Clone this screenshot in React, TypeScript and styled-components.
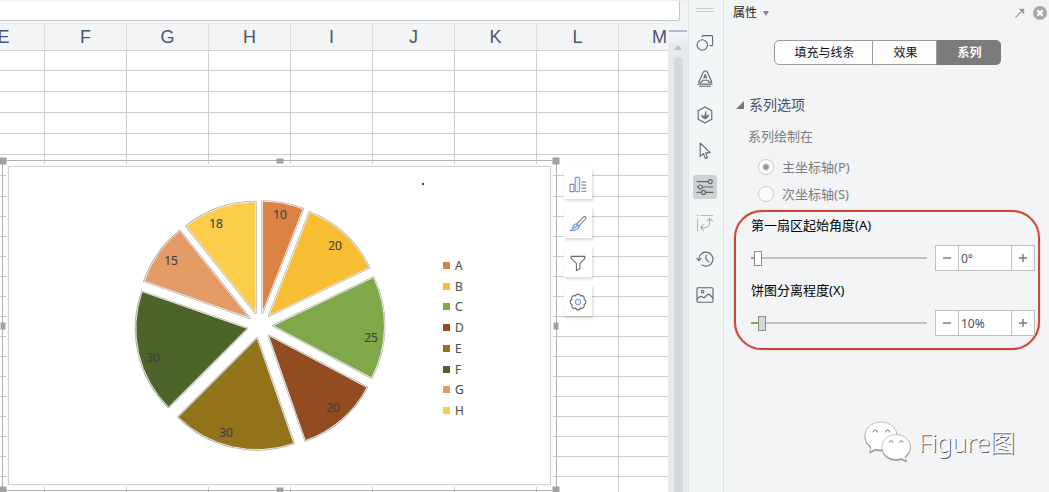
import React, { useState } from "react";
import styled, { createGlobalStyle, css } from "styled-components";

const Global = createGlobalStyle`
  *, *::before, *::after { box-sizing: border-box; }
  body {
    margin: 0;
    background: #f2f4f6;
    font-family: "Noto Sans", "Noto Sans CJK SC", sans-serif;
    font-size: 13px;
    color: #111;
  }
  button, input { font: inherit; color: inherit; margin: 0; padding: 0; }
`;

/* ---------- Page ---------- */

const Page = styled.div`
  display: flex;
  height: 100vh;
  overflow: hidden;
`;

const Workspace = styled.main`
  flex: 1;
  min-width: 0;
  display: flex;
  flex-direction: column;
`;

const FormulaBar = styled.div`
  flex: none;
  height: 23px;
  padding: 0 8px 2px 0;
  border-top: 1px solid #eceeef;
  background: #f2f4f5;
`;

const FormulaInput = styled.input`
  display: block;
  width: 100%;
  height: 20px;
  border: solid #c6c9c9;
  border-width: 0 1px 1px 0;
  border-radius: 0 0 3px 0;
  background: #fff;
  outline: none;
`;

const SheetRow = styled.div`
  flex: 1;
  min-height: 0;
  display: flex;
`;

const Sheet = styled.section`
  position: relative;
  flex: 1;
  min-width: 0;
  overflow: hidden;
  background: #fff;
`;

const Grid = styled.table`
  table-layout: fixed;
  width: 738px;
  margin-left: -37px;
  border-collapse: separate;
  border-spacing: 0;
`;

const HeadCell = styled.th`
  width: 82px;
  height: 28px;
  padding: 0;
  border-top: 1px solid #e8ebec;
  border-right: 1px solid #dcdfe1;
  border-bottom: 1px solid #cfd1d1;
  background: #f2f4f6;
  color: #4c5470;
  font: 18px/26px "Liberation Sans", sans-serif;
`;

const Cell = styled.td<{ $h: number }>`
  height: ${(p) => p.$h}px;
  padding: 0;
  border-right: 1px solid #cccdcd;
  border-bottom: 1px solid #cccdcd;
`;

/* ---------- Chart object ---------- */

const ChartFrame = styled.div`
  position: absolute;
  left: 2px;
  top: 137px;
  width: 555px;
  height: 331px;
  padding: 5px;
  border: 1px solid #b0b3b3;
`;

const ChartArea = styled.figure`
  position: relative;
  width: 100%;
  height: 100%;
  margin: 0;
  border: 1px solid #cfd1d1;
  outline: 2px solid #f8f9f9;
  background: #fff;
`;

const Handle = styled.i<{ $x: string; $y: string; $w?: number; $h?: number }>`
  position: absolute;
  left: ${(p) => p.$x};
  top: ${(p) => p.$y};
  width: ${(p) => p.$w ?? 7}px;
  height: ${(p) => p.$h ?? 7}px;
  transform: translate(-50%, -50%);
  background: #9fa2a2;
`;

const Pie = styled.svg`
  display: block;
  width: 100%;
  height: 100%;
  text {
    font: 12px "Open Sans", sans-serif;
    fill: #404040;
    stroke: #404040;
    stroke-width: 0.2px;
    text-anchor: middle;
  }
`;

const Legend = styled.ul`
  position: absolute;
  left: 434px;
  top: 88px;
  height: 166px;
  margin: 0;
  padding: 0;
  list-style: none;
  display: flex;
  flex-direction: column;
`;

const LegendItem = styled.li<{ $color: string }>`
  flex: 1;
  display: flex;
  align-items: center;
  gap: 5px;
  font: 12px "Open Sans", sans-serif;
  color: #505050;
  -webkit-text-stroke: 0.2px #505050;
  &::before {
    content: "";
    width: 7px;
    height: 7px;
    background: ${(p) => p.$color};
  }
`;

const ChartTools = styled.div`
  position: absolute;
  left: 564px;
  top: 145px;
  display: flex;
  flex-direction: column;
  gap: 8px;
`;

const ToolButton = styled.button`
  display: grid;
  place-items: center;
  width: 28px;
  height: 31px;
  padding-top: 2px;
  border: 0;
  background: #fff;
  box-shadow: 1px 2px 3px rgba(0, 0, 0, 0.16);
`;

/* ---------- Scrollbar ---------- */

const Scroll = styled.div`
  flex: none;
  width: 20px;
  display: flex;
  flex-direction: column;
  align-items: center;
  padding: 7px 1px 0;
  background: linear-gradient(#f2f4f6 14px, #e7eaec 22px);
`;

const SplitLine = styled.div`
  flex: none;
  width: 100%;
  height: 2px;
  background: #b3bccd;
`;

const ScrollUp = styled.button`
  flex: none;
  display: grid;
  place-items: center;
  width: 16px;
  height: 25px;
  padding-top: 5px;
  border: 0;
  background: none;
`;

const ScrollThumb = styled.div`
  flex: 1;
  width: 9px;
  border-radius: 5px 5px 0 0;
  background: #d5d9df;
`;

/* ---------- Icon rail ---------- */

const Rail = styled.nav`
  flex: none;
  width: 36px;
  display: flex;
  flex-direction: column;
  align-items: center;
  gap: 12px;
  padding: 8px 2px 0 0;
  border: solid #dfe2e4;
  border-width: 0 1px;
  background: #f3f6f7;
`;

const Grip = styled.div`
  width: 18px;
  height: 4px;
  margin-bottom: 7px;
  border: solid #cdd0d1;
  border-width: 1px 0;
`;

const RailButton = styled.button<{ $active?: boolean; $dim?: boolean }>`
  display: grid;
  place-items: center;
  width: 24px;
  height: 24px;
  border: 0;
  border-radius: 3px;
  background: ${(p) => (p.$active ? "#cfd1d2" : "none")};
  color: ${(p) => (p.$dim ? "#b4b6b8" : "#62666a")};
`;

/* ---------- Property panel ---------- */

const Panel = styled.aside`
  position: relative;
  flex: none;
  width: 325px;
  background: #f2f4f6;
`;

const PanelHead = styled.header`
  display: flex;
  align-items: center;
  height: 26px;
  padding: 0 2px 0 9px;
`;

const PanelTitle = styled.button`
  display: flex;
  align-items: center;
  gap: 6px;
  border: 0;
  background: none;
  font-size: 12px;
  line-height: 18px;
  color: #222;
`;

const HeadActions = styled.div`
  display: flex;
  align-items: center;
  gap: 8px;
  margin-left: auto;
`;

const PlainButton = styled.button`
  display: flex;
  border: 0;
  background: none;
`;

const Tabs = styled.div`
  display: flex;
  justify-content: center;
  padding: 14px 0 0 2px;
`;

const Tab = styled.button<{ $wide?: boolean; $on?: boolean }>`
  width: ${(p) => (p.$wide ? 99 : 64)}px;
  height: 25px;
  padding-left: 2px;
  border: 1px solid #9b9b9b;
  border-left-width: 0;
  background: #fdfdfd;
  font-size: 12px;
  line-height: 22px;
  &:first-child { border-left-width: 1px; border-radius: 5px 0 0 5px; }
  &:last-child { border-radius: 0 5px 5px 0; }
  ${(p) =>
    p.$on &&
    css`
      background: #7b7b7b;
      border-color: #7b7b7b;
      color: #fff;
      font-weight: 700;
    `}
`;

const SectionTitle = styled.h2`
  display: flex;
  align-items: center;
  gap: 5px;
  margin: 29px 0 0 12px;
  font-size: 14px;
  font-weight: 400;
  line-height: 22px;
  color: #47506c;
`;

const AxisGroup = styled.fieldset`
  margin: 0;
  padding: 10px 0 0 24px;
  border: 0;
  color: #7e7e7e;
  line-height: 20px;
`;

const AxisCaption = styled.p`
  margin: 0 0 7px;
`;

const RadioRow = styled.label`
  display: flex;
  align-items: center;
  gap: 8px;
  height: 27px;
  padding-left: 10px;
`;

const Radio = styled.input`
  appearance: none;
  width: 16px;
  height: 16px;
  border: 1px solid #c9cbcc;
  border-radius: 50%;
  background: #fafbfb;
  &:checked {
    background: radial-gradient(circle, #969696 2px, #fdfdfd 4px);
  }
`;

const Callout = styled.section`
  margin: 3px 9px 0 10px;
  padding: 4px 3px 7px 15px;
  border: 2px solid #cf4534;
  border-radius: 28px;
  box-shadow: 0 0 1px #cf4534;
`;

const Field = styled.div`
  height: 65px;
  &:last-child { height: 60px; }
`;

const FieldLabel = styled.label`
  display: block;
  height: 29px;
  line-height: 18px;
  color: #000;
`;

const FieldRow = styled.div`
  display: flex;
  align-items: center;
  gap: 8px;
`;

const SliderTrack = styled.div`
  flex: 1;
  min-width: 0;
  display: flex;
  align-items: center;
  &::before {
    content: "";
    width: 3px;
    height: 2px;
    background: #86a94d;
  }
`;

const Slider = styled.input<{ $thumb: string }>`
  appearance: none;
  flex: 1;
  min-width: 0;
  height: 15px;
  background: linear-gradient(#bfc0c1, #bfc0c1) center / 100% 2px no-repeat;
  outline: none;
  &::-webkit-slider-thumb {
    appearance: none;
    width: 8px;
    height: 15px;
    border: 1px solid #8b8b8b;
    background: ${(p) => p.$thumb};
  }
`;

const Stepper = styled.div`
  display: flex;
  width: 100px;
  height: 26px;
  border: 1px solid #bdbfc0;
  background: #fff;
`;

const StepButton = styled.button`
  display: grid;
  place-items: center;
  width: 22px;
  border: 0;
  background: none;
`;

const StepValue = styled.input`
  flex: 1;
  min-width: 0;
  padding: 0 2px;
  border: solid #bdbfc0;
  border-width: 0 1px;
  background: none;
  font-size: 12px;
  color: #4a5060;
  outline: none;
`;

const Watermark = styled.div`
  position: absolute;
  right: 34px;
  bottom: 28px;
  display: flex;
  align-items: center;
  gap: 6px;
  font: 300 25px/44px "Noto Sans", "Noto Sans CJK SC", sans-serif;
  color: #fff;
  text-shadow: 1px 1px 0 #5a5a5a;
`;

const WatermarkLogo = styled.svg`
  overflow: visible;
  filter: drop-shadow(0 1px 0 #8a8a8a);
`;

/* ---------- Data ---------- */

const columns = ["E", "F", "G", "H", "I", "J", "K", "L", "M"];
const rowHeights = [20, ...Array(6).fill(21), ...Array(40).fill(20)];

const slices = [
  { name: "A", value: 10, color: "#dc8344", x: 280, y: 219 },
  { name: "B", value: 20, color: "#f8be33", x: 335, y: 250 },
  { name: "C", value: 25, color: "#80a848", x: 371, y: 342 },
  { name: "D", value: 20, color: "#924c20", x: 333, y: 412 },
  { name: "E", value: 30, color: "#92731a", x: 226, y: 437 },
  { name: "F", value: 30, color: "#4c6329", x: 153, y: 362 },
  { name: "G", value: 15, color: "#e59b66", x: 171, y: 265 },
  { name: "H", value: 18, color: "#fbcd4b", x: 216, y: 228 },
];

const RADIUS = 111.5;
const EXPLODE = 13;
const CENTER = { x: 260, y: 325.5 };
const total = slices.reduce((sum, s) => sum + s.value, 0);

function slicePath(index: number) {
  const before = slices.slice(0, index).reduce((sum, s) => sum + s.value, 0);
  const a0 = (before / total) * Math.PI * 2;
  const a1 = ((before + slices[index].value) / total) * Math.PI * 2;
  const mid = (a0 + a1) / 2;
  const cx = CENTER.x + EXPLODE * Math.sin(mid);
  const cy = CENTER.y - EXPLODE * Math.cos(mid);
  const at = (a: number) =>
    `${(cx + RADIUS * Math.sin(a)).toFixed(2)} ${(cy - RADIUS * Math.cos(a)).toFixed(2)}`;
  return `M${cx.toFixed(2)} ${cy.toFixed(2)}L${at(a0)}A${RADIUS} ${RADIUS} 0 0 1 ${at(a1)}Z`;
}

/* Eight round lobes on a circle around (9, 9). */
const gearPath =
  Array.from({ length: 9 }, (_, i) => {
    const a = ((i - 0.5) * Math.PI) / 4;
    const p = `${(9 + 6.5 * Math.sin(a)).toFixed(2)} ${(9 - 6.5 * Math.cos(a)).toFixed(2)}`;
    return i === 0 ? `M${p}` : `A2.6 2.6 0 0 1 ${p}`;
  }).join("") + "Z";

/* ---------- Icons ---------- */

const Icon = ({ children, size = 18 }: { children: React.ReactNode; size?: number }) => (
  <svg width={size} height={size} viewBox="0 0 18 18" fill="none" stroke="currentColor"
    strokeWidth="1.1" strokeLinecap="round" strokeLinejoin="round" aria-hidden="true">
    {children}
  </svg>
);

const railItems = [
  { label: "形状", icon: <><circle cx="6.3" cy="11" r="5.2" /><path d="M6.2 3.2V2.6Q6.2 1.6 7.2 1.6H15.6Q16.6 1.6 16.6 2.6V10.6Q16.6 11.6 15.6 11.6H14" /></> },
  { label: "文本", icon: <><path d="M2.6 12.2L7.3 2.2Q8 1 9.4 1Q10.8 1 11.5 2.2L15.8 12.2H12.8L12 10.2H6.4L5.6 12.2Z" /><path d="M7.8 7.7L9.2 4.6L10.6 7.7Z" /><path d="M2 14.1H16M3.6 16.3H14.4" /></> },
  { label: "填充", icon: <><path d="M9 .9L15.8 4.8V13.2L9 17.1L2.2 13.2V4.8Z" /><path d="M9 13Q7.4 10 10 5Q10.8 8 9.4 11Q10.8 8.8 13 8.6Q12.4 12.4 9 13ZM8.6 12.8Q5.6 12 5.4 8.8Q8 9.2 8.6 12.8Z" fill="currentColor" strokeWidth=".3" /></> },
  { label: "选择", icon: <path d="M4.2 1V14.4L7.4 11.7L9.5 16.6L11.5 15.8L9.6 11.1L14.2 10.6Z" /> },
  { label: "属性", icon: <><path d="M1 3.6H12.2M1 9H2.4M6.4 9H17M1 14.4H5.6M9.6 14.4H17" /><circle cx="14.3" cy="3.6" r="2" /><circle cx="4.4" cy="9" r="2" /><circle cx="7.6" cy="14.4" r="2" /></> },
  { label: "变换", icon: <><path d="M1.5 5V16.5M4.8 1.5H16.5M1.2 1.5H1.8M4.6 13.6H8.8Q13.6 13.6 13.6 8.8V4.8M10.8 7.2L13.6 4.4L16.6 7.2M7.4 10.6L4.4 13.6L7.4 16.4" /></> },
  { label: "历史", icon: <><path d="M3 10.2A7 7 0 1 1 6 14.9" /><path d="M.8 8.4L3 10.6L5.2 8.4M10 5V9.4L13 12.2" /></> },
  { label: "图片", icon: <><rect x="1" y="1.8" width="16" height="14.4" rx="1" /><circle cx="6.6" cy="5.6" r="1.3" /><path d="M1.2 13L3.6 10.8Q5 9.8 6.3 11Q7.6 12.4 9 11L11.2 8.8Q12.6 7.8 14 9L16.8 12" /></> },
];

const chartTools = [
  { label: "图表元素", icon: <><rect x="1" y="8.4" width="4" height="7.2" stroke="#8a8a8a" /><rect x="6.2" y="1.4" width="4.4" height="14.2" rx="1" stroke="#7ba0dc" fill="#eaf1fc" /><path d="M12.8 6H16.8M12.8 9H16.8M12.8 12.2H16.8M12.8 15.2H16.8" stroke="#777" /></> },
  { label: "图表样式", icon: <><path d="M7.4 9.2L14.4 2.2Q15.6 1 16.6 1.8Q17.4 2.8 16.4 4L10 11Z" stroke="#777" /><path d="M7.2 8.8L10.2 11.6Q9.2 15.6 1.2 15.8Q3.6 14 4 12Q4.6 9.2 7.2 8.8ZM4.4 13.6L8 10.8" stroke="#6f9add" fill="#dce8f9" /></> },
  { label: "筛选", icon: <path d="M2 2.4H16L15.6 4.6L11 9.4V14.6L7.4 16.4V9.4L2.4 4.6Z" stroke="#6b6b6b" /> },
  { label: "设置", icon: <><path d={gearPath} stroke="#666" /><circle cx="9" cy="9" r="2.6" stroke="#78a6dd" /></> },
];

/* ---------- Components ---------- */

function Chart() {
  return (
    <ChartFrame>
      <ChartArea>
        <Pie viewBox="9 167 541 317" role="img" aria-label="A–H">
          {slices.map((s, i) => (
            <g key={s.name} strokeLinejoin="round">
              <path d={slicePath(i)} fill="none" stroke="#a3a7a3" strokeWidth="2" />
              <path d={slicePath(i)} fill={s.color} stroke="#f4f4f0" strokeWidth=".9" />
            </g>
          ))}
          {slices.map((s) => (
            <text key={s.name} x={s.x} y={s.y}>{s.value}</text>
          ))}
          <circle cx="423" cy="184" r="1" fill="#111" />
        </Pie>
        <Legend>
          {slices.map((s) => (
            <LegendItem key={s.name} $color={s.color}>{s.name}</LegendItem>
          ))}
        </Legend>
      </ChartArea>
      <Handle $x="0%" $y="0%" />
      <Handle $x="50%" $y="0%" $h={5} />
      <Handle $x="100%" $y="0%" />
      <Handle $x="0%" $y="50%" $w={5} />
      <Handle $x="100%" $y="50%" $w={5} />
      <Handle $x="0%" $y="100%" />
      <Handle $x="50%" $y="100%" $h={5} />
      <Handle $x="100%" $y="100%" />
    </ChartFrame>
  );
}

interface SliderFieldProps {
  id: string;
  label: string;
  unit: string;
  initial: number;
  max: number;
  thumb: string;
}

function SliderField({ id, label, unit, initial, max, thumb }: SliderFieldProps) {
  const [value, setValue] = useState(initial);
  const change = (next: number) => setValue(Math.min(max, Math.max(0, next || 0)));
  const filled = (value / max) * 100;
  return (
    <Field>
      <FieldLabel htmlFor={id}>{label}</FieldLabel>
      <FieldRow>
        <SliderTrack>
          <Slider id={id} type="range" min={0} max={max} value={value} $thumb={thumb}
            style={{
              backgroundImage: `linear-gradient(90deg, #86a94d ${filled}%, #bfc0c1 ${filled}%)`,
            }}
            onChange={(e) => change(Number(e.target.value))} />
        </SliderTrack>
        <Stepper>
          <StepButton aria-label="减少" onClick={() => change(value - 1)}>
            <svg width="8" height="8"><path d="M0 4H8" stroke="#777" strokeWidth="1.4" /></svg>
          </StepButton>
          <StepValue aria-label={label} value={`${value}${unit}`}
            onChange={(e) => change(parseInt(e.target.value, 10))} />
          <StepButton aria-label="增加" onClick={() => change(value + 1)}>
            <svg width="8" height="8"><path d="M0 4H8M4 0V8" stroke="#777" strokeWidth="1.4" /></svg>
          </StepButton>
        </Stepper>
      </FieldRow>
    </Field>
  );
}

function PropertyPanel() {
  const [tab, setTab] = useState(2);
  return (
    <Panel>
      <PanelHead>
        <PanelTitle>
          属性
          <svg width="6" height="5"><path d="M0 0H6L3 5Z" fill="#858585" /></svg>
        </PanelTitle>
        <HeadActions>
          <PlainButton aria-label="弹出">
            <svg width="10" height="10" fill="none" stroke="#999" strokeWidth="1.2">
              <path d="M.5 9.5L8 2" /><path d="M3.5 .8H9.2V6.5L6.4 3.6Z" fill="#999" stroke="none" />
            </svg>
          </PlainButton>
          <PlainButton aria-label="关闭">
            <svg width="14" height="14">
              <circle cx="7" cy="7" r="7" fill="#a9a9a9" />
              <path d="M4.4 4.4L9.6 9.6M9.6 4.4L4.4 9.6" stroke="#fff" strokeWidth="2.2" />
            </svg>
          </PlainButton>
        </HeadActions>
      </PanelHead>
      <Tabs role="tablist">
        {["填充与线条", "效果", "系列"].map((t, i) => (
          <Tab key={t} role="tab" aria-selected={tab === i} $wide={i === 0} $on={tab === i}
            onClick={() => setTab(i)}>{t}</Tab>
        ))}
      </Tabs>
      <SectionTitle>
        <svg width="8" height="8"><path d="M8 0V8H0Z" fill="#777" /></svg>
        系列选项
      </SectionTitle>
      <AxisGroup>
        <AxisCaption>系列绘制在</AxisCaption>
        <RadioRow><Radio type="radio" name="axis" defaultChecked />主坐标轴(P)</RadioRow>
        <RadioRow><Radio type="radio" name="axis" />次坐标轴(S)</RadioRow>
      </AxisGroup>
      <Callout>
        <SliderField id="angle" label="第一扇区起始角度(A)" unit="°" initial={0} max={360} thumb="#fff" />
        <SliderField id="explode" label="饼图分离程度(X)" unit="%" initial={10} max={400} thumb="#d6d8d6" />
      </Callout>
      <Watermark>
        <WatermarkLogo width="48" height="42" viewBox="0 0 48 42" aria-hidden="true">
          <g fill="#fff" stroke="#999" strokeWidth=".6" strokeLinejoin="round">
            <path d="M17 1C7.6 1 1 7.2 1 15C1 19.6 3.2 23.2 7 25.8L5.8 31L11.4 28.2Q14.4 29 18 29C27 29 33 22.6 33 15C33 7.2 26 1 17 1Z" />
            <path d="M32 13.6C24 13.6 18 19 18 26C18 33 24 38.4 32 38.4Q35 38.4 37.6 37.6L42.4 40L41.2 35.6C44.6 33.2 46.4 29.8 46.4 26C46.4 19 40 13.6 32 13.6Z" />
            <path d="M9 11.4Q9.4 9 11.2 9Q13 9 13.4 11.4M21.6 11.4Q22 9 23.8 9Q25.6 9 26 11.4M25.4 21.6Q25.8 19.8 27.2 19.8Q28.6 19.8 29 21.6M35.6 21.6Q36 19.8 37.4 19.8Q38.8 19.8 39.2 21.6" fill="none" stroke="#666" strokeWidth=".9" />
          </g>
        </WatermarkLogo>
        <span>Figure图</span>
      </Watermark>
    </Panel>
  );
}

export default function App() {
  return (
    <Page>
      <Global />
      <Workspace>
        <FormulaBar><FormulaInput aria-label="编辑栏" /></FormulaBar>
        <SheetRow>
          <Sheet>
            <Grid>
              <thead>
                <tr>{columns.map((c) => <HeadCell key={c} scope="col">{c}</HeadCell>)}</tr>
              </thead>
              <tbody>
                {rowHeights.map((h, r) => (
                  <tr key={r}>{columns.map((c) => <Cell key={c} $h={h} />)}</tr>
                ))}
              </tbody>
            </Grid>
            <Chart />
            <ChartTools>
              {chartTools.map((t) => (
                <ToolButton key={t.label} aria-label={t.label}><Icon>{t.icon}</Icon></ToolButton>
              ))}
            </ChartTools>
          </Sheet>
          <Scroll>
            <SplitLine />
            <ScrollUp aria-label="向上滚动">
              <svg width="8" height="5"><path d="M0 5L4 0L8 5Z" fill="#bcc0c4" /></svg>
            </ScrollUp>
            <ScrollThumb />
          </Scroll>
        </SheetRow>
      </Workspace>
      <Rail>
        <Grip />
        {railItems.map((item, i) => (
          <RailButton key={item.label} aria-label={item.label} $active={i === 4} $dim={i === 5}>
            <Icon>{item.icon}</Icon>
          </RailButton>
        ))}
      </Rail>
      <PropertyPanel />
    </Page>
  );
}
